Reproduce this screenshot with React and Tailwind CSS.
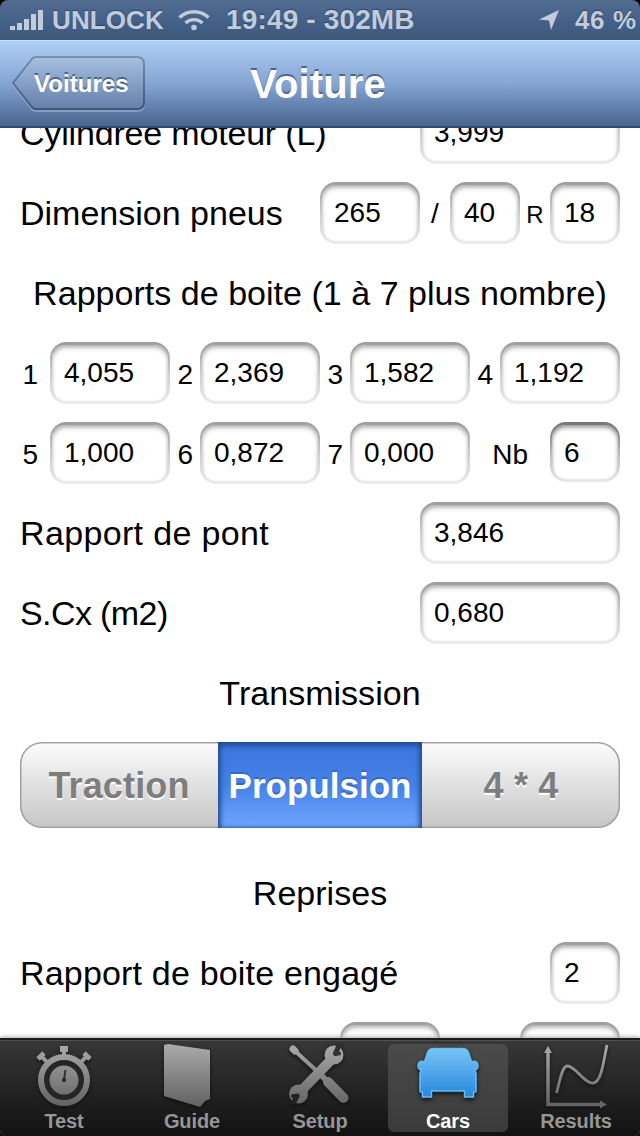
// Car form screen - edits tyre, gearbox and transmission values
import React, { useState } from 'react';
import clsx from 'clsx';

function StatusBar() {
    return (
        <div className="flex h-10 shrink-0 items-center rounded-t-[8px] bg-linear-to-b from-[#526d8f] via-[#46618a] to-[#3d5878] pl-2.5 text-[26px] leading-10 font-bold text-[#c0cbdb] [text-shadow:0_-1px_1px_#2f4564]">
            <svg width="33" height="22" viewBox="0 0 33 22" fill="currentColor">
                <path d="M0 17h5v4H0zM7 14h5v7H7zM14 10h5v11h-5zM21 5h5v16h-5zM28 1h5v20h-5z" />
            </svg>
            <span className="ml-[9px] w-[126px] tracking-[0.1px]">UNLOCK</span>
            <svg width="32" height="22" viewBox="0 0 32 22" fill="none" stroke="currentColor" strokeWidth="3.4">
                <path d="M1.5 8.5a21 21 0 0 1 29 0M7.5 14a12.5 12.5 0 0 1 17 0" />
                <circle cx="16" cy="18.5" r="2.8" fill="currentColor" stroke="none" />
            </svg>
            <span className="ml-4 text-[28px] tracking-[0.15px]">19:49 - 302MB</span>
            <svg className="mr-3.5 ml-auto" width="21" height="21" viewBox="0 0 21 21" fill="currentColor">
                <path d="M20 0 12 20 10 10.500 0 9.500z" />
            </svg>
            <span className="w-[66px] pl-px tracking-[0.6px] whitespace-nowrap">46 %</span>
        </div>
    );
}

function NavBar() {
    return (
        <div className="grid h-[88px] shrink-0 grid-cols-[145px_1fr_145px] items-center border-t border-b-2 border-t-[#cfe2fa] border-b-[#2d4a74] bg-linear-to-b from-[#b0cff5] via-[#85a5d3] to-[#46658f]">
            <button className="relative ml-3 h-[56px] w-[134px] text-left">
                <svg className="absolute inset-0" width="134" height="56" viewBox="0 0 134 56">
                    <defs>
                        <linearGradient id="back" x1="0" y1="0" x2="0" y2="1">
                            <stop offset="0" stopColor="#a6c0e2" />
                            <stop offset="1" stopColor="#6480a8" />
                        </linearGradient>
                        <linearGradient id="backLine" x1="0" y1="0" x2="0" y2="1">
                            <stop offset="0" stopColor="#7690b5" />
                            <stop offset="1" stopColor="#3c5478" />
                        </linearGradient>
                    </defs>
                    <path d="M24 2h101q7 0 7 7v39q0 7-7 7H24q-3 0-5-3L1 29 19 5q2-3 5-3z" fill="none" stroke="#9db6d8" strokeWidth="2" opacity=".6" />
                    <path d="M24 1h101q7 0 7 7v38q0 7-7 7H24q-3 0-5-3L1 27 19 4q2-3 5-3z" fill="url(#back)" stroke="url(#backLine)" strokeWidth="2" />
                </svg>
                <span className="relative ml-[22px] text-2xl leading-[52px] font-bold tracking-[0.05px] text-white [text-shadow:0_-2px_0_#4d6486]">Voitures</span>
            </button>
            <h1 className="pr-1 text-center text-[40px] leading-[82px] font-bold tracking-[0.1px] text-white [text-shadow:0_-2px_0_#4d648a]">Voiture</h1>
        </div>
    );
}

// Rounded text field with the recessed bevel
function Field({ value, className, focused = false }) {
    return (
        <div
            className={clsx(
                'shrink-0 rounded-[16px] bg-linear-to-b px-[2px] pt-[3px] pb-[2px]',
                focused ? 'h-[60px] from-[#737373] via-[#b8b8b8] to-[#e9e9e9]' : 'h-[62px] from-[#9c9c9c] via-[#cdcdcd] to-[#ececec]',
                className
            )}
        >
            <div
                className={clsx(
                    'h-full rounded-[14px] bg-white pl-3 text-[28px] leading-[55px]',
                    focused
                        ? 'shadow-[inset_0_3px_5px_-1px_#8a8a8a,inset_0_0_3px_#cfcfcf]'
                        : 'shadow-[inset_0_3px_5px_-1px_#a6a6a6,inset_0_0_3px_#d6d6d6]'
                )}
            >
                {value}
            </div>
        </div>
    );
}

function Row({ label, labelClass, children }) {
    return (
        <div className="flex h-20 items-start">
            <span className={clsx('mr-auto text-[34px] leading-[62px] whitespace-nowrap', labelClass)}>{label}</span>
            {children}
        </div>
    );
}

function Heading({ children }) {
    return <h2 className="h-20 text-center text-[34px] leading-[62px] tracking-[0.03px] whitespace-nowrap">{children}</h2>;
}

function Gear({ number, value, first = false }) {
    return (
        <div className="flex w-[150px] justify-end">
            <span className={clsx('text-[28px] leading-[65px]', first ? 'mr-3' : 'mr-[7px]')}>{number}</span>
            <Field value={value} className="w-[120px]" />
        </div>
    );
}

function TransmissionPicker() {
    const [selected, setSelected] = useState('Propulsion');

    return (
        <div className="mb-[34px] grid h-[86px] grid-cols-[198px_204px_198px] overflow-hidden rounded-[22px] bg-linear-to-b from-[#fdfdfd] to-[#c5c5c5] shadow-[inset_0_0_0_1.5px_#a1a1a1]">
            {['Traction', 'Propulsion', '4 * 4'].map((name) => (
                <button
                    key={name}
                    onClick={() => setSelected(name)}
                    className={clsx(
                        'text-center font-bold whitespace-nowrap',
                        selected === name
                            ? 'bg-linear-to-b from-[#3b76de] via-[#4681e8] to-[#70a7fd] text-[35px] leading-[87px] text-white shadow-[inset_0_3px_7px_#21488f,inset_2px_0_5px_#2a579f,inset_-2px_0_5px_#2a579f] [text-shadow:0_-2px_0_#3969bd]'
                            : 'text-4xl leading-[87px] tracking-[0.15px] text-[#7e7e7e] [text-shadow:0_2px_0_#fff]'
                    )}
                >
                    {name}
                </button>
            ))}
        </div>
    );
}

function StopwatchIcon() {
    return (
        <>
            <path d="M56 2h8v6h-2v5h-4V8h-2z" fill="url(#grey)" />
            <path d="m37 12 9 9M83 12l-9 9" stroke="#999" strokeWidth="4" />
            <path d="m34 15 6-6M86 15l-6-6" stroke="#9c9c9c" strokeWidth="5" />
            <circle cx="60" cy="36" r="23" fill="#252525" stroke="url(#grey)" strokeWidth="6" />
            <circle cx="60" cy="36" r="14.500" fill="url(#grey)" />
            <path d="m60 36 1.500-10" stroke="#333" strokeWidth="2" />
            <circle cx="60" cy="36" r="2" fill="#222" />
        </>
    );
}

function GuideIcon() {
    return <path d="M32 1 36 0 78 6v49l-5 2-5 6-36-11z" fill="url(#grey)" />;
}

function ToolsIcon() {
    return (
        <g stroke="url(#grey)" fill="none" strokeLinecap="round">
            <path d="m34 6 26 24" strokeWidth="4" />
            <path d="m33 5 2 2" strokeWidth="7" />
            <path d="m58 28 8 8" strokeWidth="6" />
            <path d="m68 38 15.500 16" strokeWidth="10" />
            <path d="m42 46 30-31" strokeWidth="10" strokeLinecap="butt" />
            <circle cx="74" cy="11" r="9.500" fill="url(#grey)" stroke="none" />
            <circle cx="38.500" cy="50" r="9.500" fill="url(#grey)" stroke="none" />
            <path d="m75.500 9.500 3-7" stroke="#303030" strokeWidth="5" />
            <path d="m75.500 9.500 3.500 0" stroke="#303030" strokeWidth="4" />
            <path d="m37 52-3 6" stroke="#212121" strokeWidth="5" />
            <path d="m37 52-4 0" stroke="#212121" strokeWidth="4" />
        </g>
    );
}

function CarIcon() {
    return (
        <path
            d="M46 4.500h28q5 0 6.500 4l3 9q6-1 6.500 4 0 4-3 4l1 4v18l-2.500 1v4.500h-9V47h-33v6h-9v-4.500l-2.500-1v-18l1-4q-3 0-3-4 .5-5 6.500-4l3-9q1.500-4 6.500-4z"
            fill="url(#blue)"
            stroke="#66bff5"
            strokeWidth="1.500"
        />
    );
}

function ChartIcon() {
    return (
        <g fill="none" stroke="url(#grey)">
            <path d="M32 7v53.500h54" strokeWidth="3.500" />
            <path d="m28 9 4-7 4 7zM84 56.500l7 4-7 4z" fill="url(#grey)" stroke="none" />
            <path d="M40.500 49c3-10 5-27 11-27 8 0 17 18 26 17 8-1 10-22 13.500-38" strokeWidth="2.800" />
        </g>
    );
}

const TABS = [
    { label: 'Test', icon: StopwatchIcon },
    { label: 'Guide', icon: GuideIcon },
    { label: 'Setup', icon: ToolsIcon },
    { label: 'Cars', icon: CarIcon },
    { label: 'Results', icon: ChartIcon }
];

function TabBar() {
    const [active, setActive] = useState('Cars');

    return (
        <nav className="relative grid h-[98px] shrink-0 grid-cols-5 rounded-b-[8px] border-t-2 border-[#1c1c1c] bg-linear-to-b from-[#383838] to-[#121212] pt-1 shadow-[0_-1px_4px_#aaa,inset_0_1px_0_#505050]">
            <svg className="absolute" width="0" height="0">
                <defs>
                    <linearGradient id="grey" gradientUnits="userSpaceOnUse" x1="0" y1="0" x2="0" y2="64">
                        <stop offset="0" stopColor="#ababab" />
                        <stop offset="1" stopColor="#606060" />
                    </linearGradient>
                    <linearGradient id="blue" x1="0" y1="0" x2="0" y2="1">
                        <stop offset="0" stopColor="#77c5f5" />
                        <stop offset="1" stopColor="#2786df" />
                    </linearGradient>
                </defs>
            </svg>
            {TABS.map(({ label, icon: Icon }) => (
                <button
                    key={label}
                    onClick={() => setActive(label)}
                    className={clsx(
                        'mx-1 flex h-[88px] flex-col items-center rounded-[6px] text-xl font-bold',
                        active === label ? 'bg-linear-to-b from-[#4b4b4b] to-[#3a3a3a] text-white' : 'text-[#969696]'
                    )}
                >
                    <svg className="shrink-0 overflow-visible drop-shadow-[0_2px_2px_#111]" width="120" height="66" viewBox="0 0 120 66">
                        <Icon />
                    </svg>
                    <span className="leading-[22px] tracking-[-0.1px]">{label}</span>
                </button>
            ))}
        </nav>
    );
}

export default function App() {
    return (
        <div className="flex h-[1136px] w-[640px] flex-col overflow-hidden bg-black font-['Liberation_Sans',Arial,sans-serif] text-black">
            <StatusBar />
            <NavBar />

            {/* Form is scrolled, so the first and last rows are cut by the bars */}
            <main className="min-h-0 flex-1 overflow-hidden bg-white px-5">
                <div className="-mt-[26px]">
                    <Row label="Cylindrée moteur (L)" labelClass="tracking-[-0.18px]">
                        <Field value="3,999" className="w-[200px]" />
                    </Row>
                    <Row label="Dimension pneus">
                        <Field value="265" className="w-[100px]" />
                        <span className="w-[30px] text-center text-[28px] leading-[64px]">/</span>
                        <Field value="40" className="w-[70px]" />
                        <span className="w-[30px] text-center text-2xl leading-[66px]">R</span>
                        <Field value="18" className="w-[70px]" />
                    </Row>
                    <Heading>Rapports de boite (1 à 7 plus nombre)</Heading>
                    <div className="flex h-20">
                        <Gear number="1" value="4,055" first />
                        <Gear number="2" value="2,369" />
                        <Gear number="3" value="1,582" />
                        <Gear number="4" value="1,192" />
                    </div>
                    <div className="flex h-20">
                        <Gear number="5" value="1,000" first />
                        <Gear number="6" value="0,872" />
                        <Gear number="7" value="0,000" />
                        <div className="flex flex-1 justify-end">
                            <span className="mr-[22px] text-[28px] leading-[65px]">Nb</span>
                            <Field value="6" className="w-[70px]" focused />
                        </div>
                    </div>
                    <Row label="Rapport de pont" labelClass="tracking-[0.35px]">
                        <Field value="3,846" className="w-[200px]" />
                    </Row>
                    <Row label="S.Cx (m2)" labelClass="tracking-[-0.6px]">
                        <Field value="0,680" className="w-[200px]" />
                    </Row>
                    <Heading>Transmission</Heading>
                    <TransmissionPicker />
                    <Heading>Reprises</Heading>
                    <Row label="Rapport de boite engagé" labelClass="tracking-[0.18px]">
                        <Field value="2" className="w-[70px]" />
                    </Row>
                    <Row>
                        <Field className="mr-20 w-[100px]" />
                        <Field className="w-[100px]" />
                    </Row>
                </div>
            </main>

            <TabBar />
        </div>
    );
}
